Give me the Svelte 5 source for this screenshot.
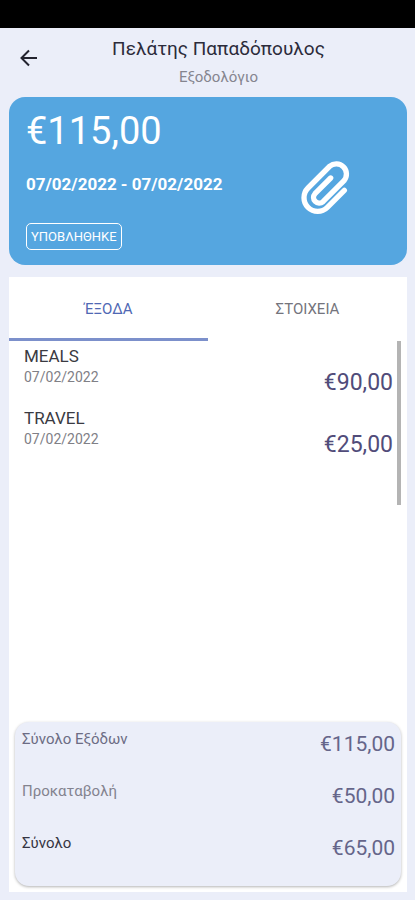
<script>
  const expenses = [
    { name: 'MEALS', date: '07/02/2022', amount: '€90,00' },
    { name: 'TRAVEL', date: '07/02/2022', amount: '€25,00' },
  ];
  const totals = [
    { label: 'Σύνολο Εξόδων', amount: '€115,00', tone: 'mid' },
    { label: 'Προκαταβολή', amount: '€50,00', tone: 'soft' },
    { label: 'Σύνολο', amount: '€65,00', tone: 'strong' },
  ];
  let tab = $state('expenses');
</script>

<div class="screen">
  <div class="status"></div>

  <header>
    <button class="back" aria-label="Πίσω">
      <svg width="18" height="18" viewBox="0 0 18 18" fill="none" stroke="#23232f" stroke-width="2">
        <path d="M17 9H2M9 1.5L1.5 9L9 16.5" />
      </svg>
    </button>
    <div class="titles">
      <h1>Πελάτης Παπαδόπουλος</h1>
      <p>Εξοδολόγιο</p>
    </div>
  </header>

  <section class="card">
    <div class="info">
      <div class="sum">€115,00</div>
      <div class="period">07/02/2022 - 07/02/2022</div>
      <span class="badge">ΥΠΟΒΛΗΘΗΚΕ</span>
    </div>
    <button class="attach" aria-label="Συνημμένα">
      <svg width="49" height="56" viewBox="288 208 147 168" fill="none" stroke="#fff" stroke-width="16" stroke-linecap="round">
        <path d="M418 302L367 353A41 41 0 0 1 309 295L374 230A30.5 30.5 0 0 1 417 273L354 336A17 17 0 0 1 330 312L377 265" />
      </svg>
    </button>
  </section>

  <main>
    <div class="tabs" role="tablist">
      <button role="tab" aria-selected={tab === 'expenses'} class:active={tab === 'expenses'} onclick={() => (tab = 'expenses')}>ΈΞΟΔΑ</button>
      <button role="tab" aria-selected={tab === 'details'} class:active={tab === 'details'} onclick={() => (tab = 'details')}>ΣΤΟΙΧΕΙΑ</button>
    </div>

    <div class="list">
      {#each expenses as e}
        <div class="row">
          <div>
            <div class="name">{e.name}</div>
            <div class="date">{e.date}</div>
          </div>
          <div class="amount">{e.amount}</div>
        </div>
      {/each}
      <div class="thumb"></div>
    </div>

    <section class="totals">
      {#each totals as t}
        <div class="total">
          <span class={t.tone}>{t.label}</span>
          <span class="value">{t.amount}</span>
        </div>
      {/each}
    </section>
  </main>
</div>

<style>
  :global(body) {
    background: #ebeef9;
  }
  .screen {
    min-height: 100vh;
    box-sizing: border-box;
    padding-bottom: 8px;
    display: flex;
    flex-direction: column;
    font-family: Roboto, 'Noto Sans', sans-serif;
    background: #ebeef9;
  }
  button {
    font: inherit;
    border: 0;
    padding: 0;
    background: none;
    cursor: pointer;
  }
  svg {
    display: block;
  }
  .status {
    height: 28px;
    background: #000;
  }
  header {
    display: flex;
    padding: 8px 16px 8px 20px;
  }
  .back {
    width: 18px;
    height: 44px;
  }
  .titles {
    flex: 1;
    text-align: center;
    padding-bottom: 1px;
  }
  h1 {
    margin: 0;
    font-size: 19px;
    line-height: 26px;
    font-weight: 400;
    color: #2b2b3b;
  }
  .titles p {
    margin: 4px 0 0;
    font-size: 15px;
    line-height: 22px;
    color: #85858f;
  }
  .card {
    margin: 0 8px 12px 9px;
    padding: 12px 57px 15px 17px;
    border-radius: 16px;
    background: #55a6e0;
    color: #fff;
    display: flex;
    justify-content: space-between;
    align-items: center;
  }
  .sum {
    font-size: 38px;
    line-height: 44px;
  }
  .period {
    margin: 20px 0 28px;
    font-size: 17px;
    line-height: 22px;
    font-weight: 700;
  }
  .badge {
    display: block;
    width: max-content;
    padding: 1px 4px 0;
    border: 1px solid #fff;
    border-radius: 5px;
    font-size: 13px;
    line-height: 24px;
  }
  .attach {
    margin-top: 14px;
  }
  main {
    flex: 1;
    margin: 0 8px 0 9px;
    background: #fff;
    display: flex;
    flex-direction: column;
  }
  .tabs {
    display: flex;
  }
  .tabs button {
    flex: 1;
    height: 64px;
    padding-top: 2px;
    border-bottom: 3px solid transparent;
    font-size: 15px;
    color: #74747c;
  }
  .tabs button.active {
    color: #5068b4;
    border-color: #7c90cb;
  }
  .list {
    flex: 1;
    position: relative;
  }
  .row {
    display: flex;
    justify-content: space-between;
    padding: 4px 14px 16px 15px;
  }
  .name {
    font-size: 17px;
    line-height: 22px;
    color: #3a3a42;
  }
  .date {
    font-size: 14px;
    line-height: 20px;
    color: #808086;
  }
  .amount {
    padding-top: 25px;
    font-size: 23px;
    line-height: 26px;
    height: 17px;
    color: #514c7a;
  }
  .thumb {
    position: absolute;
    top: 0;
    right: 6px;
    width: 4px;
    height: 164px;
    background: #b4b4b4;
  }
  .totals {
    margin: 0 6px 6px;
    padding: 7px 6px 1px 7px;
    border-radius: 14px;
    background: #ebeef9;
    box-shadow: 0 1px 3px #0000004d;
  }
  .total {
    display: flex;
    justify-content: space-between;
    height: 52px;
    font-size: 15px;
    line-height: 20px;
  }
  .value {
    padding-top: 2px;
    font-size: 21px;
    line-height: 26px;
    color: #65658a;
  }
  .mid {
    color: #6c6c84;
  }
  .soft {
    color: #83838f;
  }
  .strong {
    color: #353543;
  }
</style>
